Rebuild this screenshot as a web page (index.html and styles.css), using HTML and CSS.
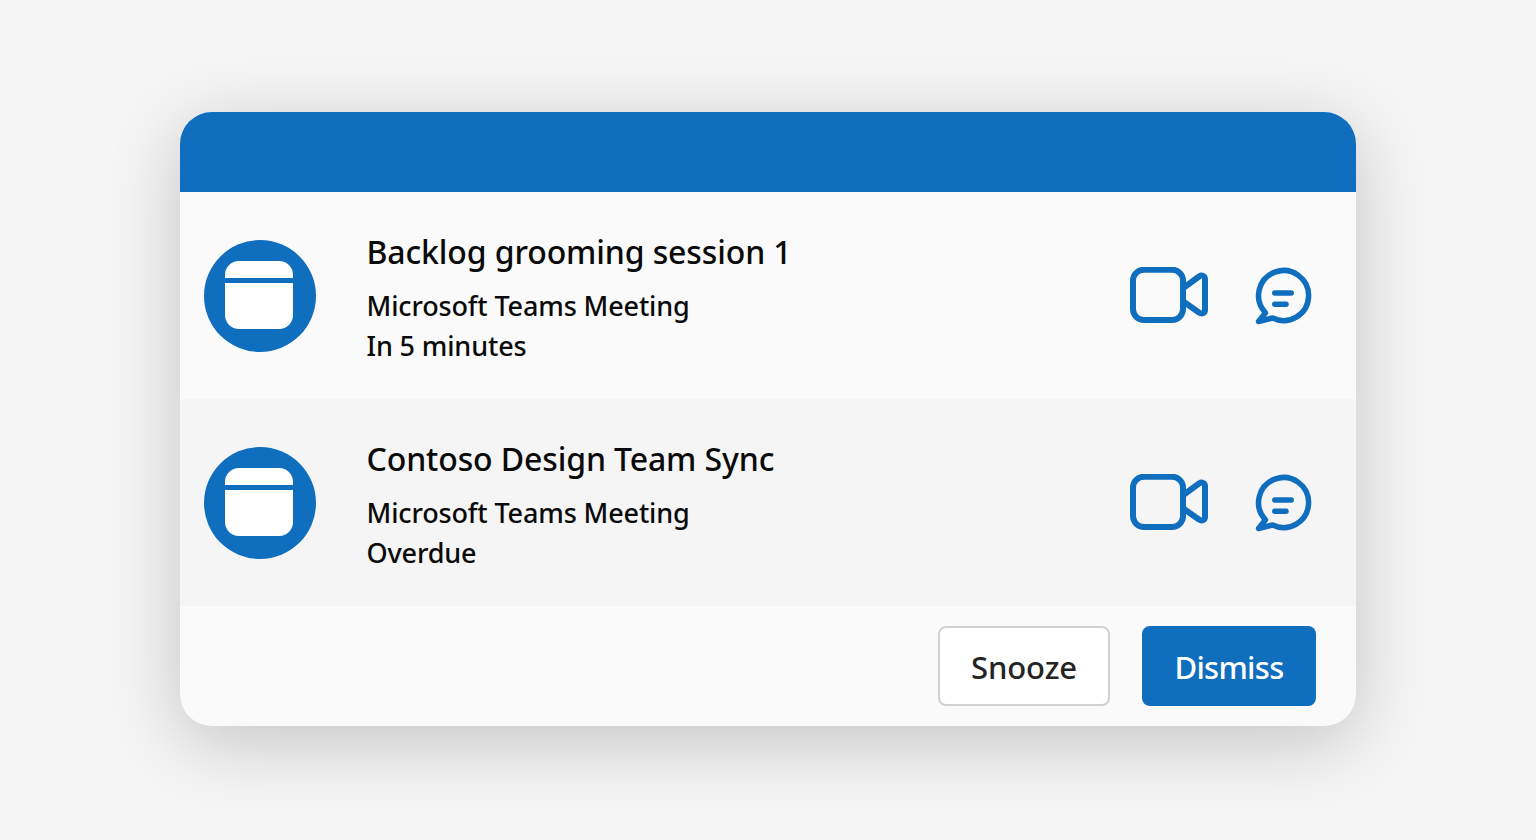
FILE: index.html
```html
<!DOCTYPE html>
<html lang="en">
<head>
<meta charset="utf-8">
<title>Reminders</title>
<link rel="stylesheet" href="styles.css">
</head>
<body>
<main class="card">
  <header class="card-header"></header>
  <section class="row">
    <svg class="cal" viewBox="0 0 112 112"><circle cx="56" cy="56" r="56" fill="#106ebe"/><path fill="#fff" d="M21 38V35A14 14 0 0 1 35 21H75A14 14 0 0 1 89 35V38ZM21 43H89V75A14 14 0 0 1 75 89H35A14 14 0 0 1 21 75Z"/></svg>
    <div class="info">
      <h2 class="title">Backlog grooming session 1</h2>
      <p class="line line-first">Microsoft Teams Meeting</p>
      <p class="line">In 5 minutes</p>
    </div>
    <div class="actions">
      <svg class="video" viewBox="0 0 80 58" fill="none" stroke="#106ebe" stroke-width="6" stroke-linejoin="round"><rect x="4" y="2.700" width="50" height="50.300" rx="11"/><path d="M55 20.500L70 9.500C73 7.500 76 9 76 12V43C76 46 73 47.500 70 45.500L55 35"/></svg>
      <svg class="chat" viewBox="0 0 58 58" fill="none" stroke="#106ebe" stroke-width="5.500" stroke-linecap="round" stroke-linejoin="round"><path d="M10.500 45.800A25 25 0 1 1 17.600 51L3.500 54.500Z"/><path d="M19.800 26H36.200M19.800 37.300H31"/></svg>
    </div>
  </section>
  <section class="row row-alt">
    <svg class="cal" viewBox="0 0 112 112"><circle cx="56" cy="56" r="56" fill="#106ebe"/><path fill="#fff" d="M21 38V35A14 14 0 0 1 35 21H75A14 14 0 0 1 89 35V38ZM21 43H89V75A14 14 0 0 1 75 89H35A14 14 0 0 1 21 75Z"/></svg>
    <div class="info">
      <h2 class="title">Contoso Design Team Sync</h2>
      <p class="line line-first">Microsoft Teams Meeting</p>
      <p class="line">Overdue</p>
    </div>
    <div class="actions">
      <svg class="video" viewBox="0 0 80 58" fill="none" stroke="#106ebe" stroke-width="6" stroke-linejoin="round"><rect x="4" y="2.700" width="50" height="50.300" rx="11"/><path d="M55 20.500L70 9.500C73 7.500 76 9 76 12V43C76 46 73 47.500 70 45.500L55 35"/></svg>
      <svg class="chat" viewBox="0 0 58 58" fill="none" stroke="#106ebe" stroke-width="5.500" stroke-linecap="round" stroke-linejoin="round"><path d="M10.500 45.800A25 25 0 1 1 17.600 51L3.500 54.500Z"/><path d="M19.800 26H36.200M19.800 37.300H31"/></svg>
    </div>
  </section>
  <footer class="card-footer">
    <button class="btn btn-secondary">Snooze</button>
    <button class="btn btn-primary">Dismiss</button>
  </footer>
</main>
</body>
</html>
```
FILE: styles.css
```css
* { box-sizing: border-box; }
html, body { height: 100%; }
body {
  margin: 0;
  padding-top: 112px;
  background: #f5f5f5;
  font-family: "Noto Sans", "Open Sans", sans-serif;
  overflow: hidden;
}
.card {
  width: 1176px;
  height: 614px;
  margin: 0 auto;
  background: #fafafa;
  border-radius: 32px;
  overflow: hidden;
  box-shadow: 0 16px 72px rgba(0, 0, 0, 0.2);
  display: flex;
  flex-direction: column;
}
.card-header { height: 80px; background: #106ebe; flex: none; }
.row {
  height: 207px;
  flex: none;
  display: flex;
  align-items: center;
  padding: 0 43px 0 24px;
}
.row-alt { background: #f5f5f5; }
.cal { width: 112px; height: 112px; flex: none; }
.info { margin-left: 50.500px; flex: 1; }
.title { margin: 5px 0 0; font-size: 32px; line-height: 44px; font-weight: 500; letter-spacing: -0.12px; color: #0a0a0a; }
.line { margin: 0; font-size: 27px; line-height: 40px; font-weight: 500; letter-spacing: -0.14px; color: #0a0a0a; }
.line-first { margin-top: 12px; }
.actions { display: flex; align-items: center; gap: 46px; }
.video { width: 80px; height: 58px; }
.chat { width: 58px; height: 58px; }
.card-footer {
  flex: 1;
  display: flex;
  justify-content: flex-end;
  align-items: flex-start;
  gap: 32px;
  padding: 20px 40px 0 0;
}
.btn {
  height: 80px;
  border-radius: 8px;
  font-family: inherit;
  font-size: 31px;
  font-weight: 500;
  padding: 2px 0 0;
}
.btn-secondary { width: 172px; background: #fff; border: 2px solid #d1d1d1; color: #242424; letter-spacing: -0.1px; }
.btn-primary { width: 174px; background: #106ebe; border: 0; color: #fff; letter-spacing: -0.7px; }
```
